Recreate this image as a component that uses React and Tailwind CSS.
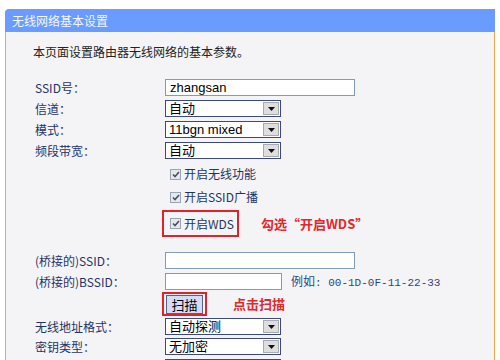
import React from 'react';

const cjk = "font-['Noto_Sans_CJK_SC',sans-serif]";

function Select({ value }) {
  return (
    <div className="w-[116px] h-[17px] border border-[#3b4886] bg-white flex items-stretch">
      <span className="flex-1 pl-[3px] text-[13px] leading-[15px] text-black whitespace-nowrap font-['Liberation_Sans','Noto_Sans_CJK_SC',sans-serif]">
        {value}
      </span>
      <span className="w-[16px] m-[1px] bg-[#dedede] border border-[#a9a9b4] flex items-center justify-center">
        <svg width="7" height="4" viewBox="0 0 7 4">
          <path d="M0 0h7L3.5 4z" fill="#111" />
        </svg>
      </span>
    </div>
  );
}

function Input({ value, width = 'w-[190px]' }) {
  return (
    <div className={`${width} h-[17px] border border-[#7f9db9] bg-white pl-[4px] text-[13px] leading-[15px] text-black font-['Liberation_Sans',sans-serif]`}>
      {value}
    </div>
  );
}

function Check({ label }) {
  return (
    <div className="flex items-center gap-[3px] whitespace-nowrap">
      <span className="w-[11px] h-[11px] shrink-0 border border-[#97a3b6] bg-[#e6e8ec] flex items-center justify-center">
        <svg width="8" height="7" viewBox="0 0 8 7">
          <path d="M1 3.5l2 2L7 1" stroke="#4a4f5a" strokeWidth="1.6" fill="none" />
        </svg>
      </span>
      <span className={`text-[12px] text-[#1f3366] ${cjk}`}>{label}</span>
    </div>
  );
}

function Row({ label, children, className = '' }) {
  return (
    <div className={`flex items-center ${className}`}>
      <div className={`w-[132px] shrink-0 pl-[2px] text-[12px] text-[#1f3366] whitespace-nowrap ${cjk}`}>{label}</div>
      {children}
    </div>
  );
}

export default function App() {
  return (
    <div className="w-[500px] h-[360px] overflow-hidden bg-white pt-[9px] pl-[5px]">
      <div className={`w-[490px] h-[23px] bg-[#6a9bff] rounded-tl-[4px] pl-[7px] flex items-center text-[#f4f7ff] text-[12px] ${cjk}`}>
        无线网络基本设置
      </div>
      <div className="w-[490px] h-[340px] border-x border-[#f2a54a] bg-[#f4f4f6] pl-[27px]">
        <div className={`pt-[10px] h-[30px] flex items-center text-[12px] text-[#222] ${cjk}`}>
          本页面设置路由器无线网络的基本参数。
        </div>

        <Row label="SSID号：" className="mt-[17px] h-[17px]">
          <Input value="zhangsan" />
        </Row>
        <Row label="信道：" className="mt-[4px] h-[17px]">
          <Select value="自动" />
        </Row>
        <Row label="模式：" className="mt-[4px] h-[17px]">
          <Select value="11bgn mixed" />
        </Row>
        <Row label="频段带宽：" className="mt-[4px] h-[17px]">
          <Select value="自动" />
        </Row>

        <Row label="" className="mt-[5px] h-[20px]">
          <div className="pl-[5px]">
            <Check label="开启无线功能" />
          </div>
        </Row>
        <Row label="" className="mt-[3px] h-[20px]">
          <div className="pl-[5px]">
            <Check label="开启SSID广播" />
          </div>
        </Row>
        <Row label="" className="mt-[3px] h-[27px]">
          <div className="-ml-[3px] h-[27px] border-2 border-[#e3212b] pl-[6px] pr-[3px] flex items-center">
            <Check label="开启WDS" />
          </div>
          <span className={`ml-[22px] text-[13px] font-bold text-[#e3262b] whitespace-nowrap ${cjk}`}>勾选“开启WDS”</span>
        </Row>

        <Row label="(桥接的)SSID：" className="mt-[15px] h-[17px]">
          <Input value="" />
        </Row>
        <Row label="(桥接的)BSSID：" className="mt-[4px] h-[17px]">
          <Input value="" width="w-[117px]" />
          <span className={`ml-[9px] text-[12px] text-[#2c4680] whitespace-nowrap ${cjk}`}>
            例如<span className="font-['Liberation_Mono',monospace] text-[11px]">: 00-1D-0F-11-22-33</span>
          </span>
        </Row>
        <Row label="" className="mt-[2px] h-[24px]">
          <div className="-ml-[3px] h-[24px] w-[45px] border-2 border-[#e3212b] flex items-center justify-center">
            <button className={`w-[37px] h-[19px] bg-[#d6dcf6] border border-[#5e6080] text-[13px] leading-[17px] text-black ${cjk}`}>
              扫描
            </button>
          </div>
          <span className={`ml-[26px] text-[13px] font-bold text-[#e3262b] whitespace-nowrap ${cjk}`}>点击扫描</span>
        </Row>
        <Row label="无线地址格式：" className="mt-[2px] h-[17px]">
          <Select value="自动探测" />
        </Row>
        <Row label="密钥类型：" className="mt-[3px] h-[17px]">
          <Select value="无加密" />
        </Row>
        <Row label="" className="mt-[4px] h-[17px]">
          <Select value="" />
        </Row>
      </div>
    </div>
  );
}
